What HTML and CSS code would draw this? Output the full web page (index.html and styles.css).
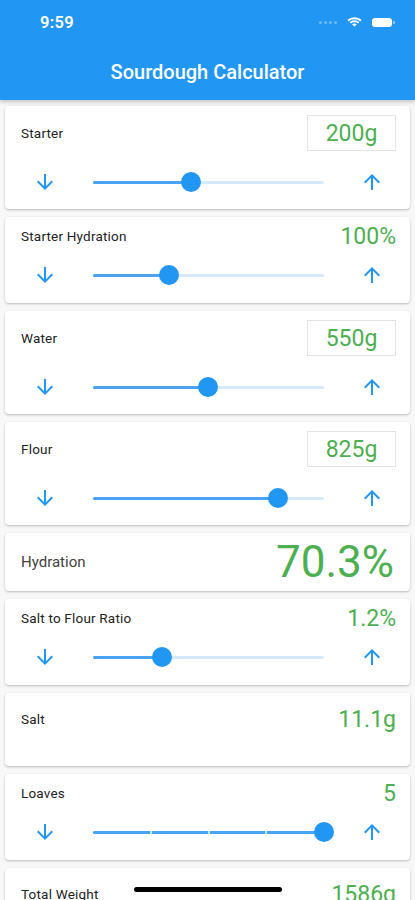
FILE: index.html
```html
<!DOCTYPE html>
<html lang="en">

<head>
    <meta charset="UTF-8">
    <meta name="viewport" content="width=device-width, initial-scale=1.0">
    <title>Sourdough Calculator</title>
    <link rel="stylesheet" href="styles.css">
</head>

<body>
    <header class="app-bar">
        <div class="status-bar">
            <span class="time">9:59</span>
            <div class="status-icons">
                <span class="signal"><i></i><i></i><i></i><i></i></span>
                <svg class="wifi" width="15" height="11" viewBox="0 0 15 11">
                    <path d="M7.5 2.2c2.2 0 4.2.8 5.7 2.2l1.3-1.4C12.6 1.2 10.2.2 7.5.2S2.4 1.2.5 3l1.3 1.4c1.5-1.4 3.5-2.2 5.7-2.2z" fill="#fff"/>
                    <path d="M7.5 5.2c1.4 0 2.6.5 3.6 1.4l1.3-1.4C11.1 4 9.4 3.2 7.5 3.2S3.9 4 2.6 5.2l1.3 1.4c1-.9 2.2-1.4 3.6-1.4z" fill="#fff"/>
                    <path d="M7.5 6.4c-.9 0-1.7.3-2.3.9l2.3 2.5 2.3-2.5c-.6-.6-1.4-.9-2.3-.9z" fill="#fff"/>
                </svg>
                <span class="battery"><span class="level"></span></span>
            </div>
        </div>
        <div class="toolbar">
            <h1>Sourdough Calculator</h1>
        </div>
    </header>

    <main class="cards">
        <!-- Starter -->
        <section class="card input">
            <div class="head">
                <span class="label">Starter</span>
                <span class="value-box">200g</span>
            </div>
            <div class="slider-row">
                <button class="step"><svg viewBox="0 0 24 24"><path d="M20 12l-1.41-1.41L13 16.17V4h-2v12.17l-5.58-5.59L4 12l8 8 8-8z"/></svg></button>
                <div class="slider" style="--v: 42.4%"><div class="track"><div class="fill"></div><div class="thumb"></div></div></div>
                <button class="step"><svg viewBox="0 0 24 24"><path d="M4 12l1.41 1.41L11 7.83V20h2V7.83l5.58 5.59L20 12l-8-8-8 8z"/></svg></button>
            </div>
        </section>

        <!-- Starter hydration -->
        <section class="card ranged">
            <div class="head">
                <span class="label">Starter Hydration</span>
                <span class="value">100%</span>
            </div>
            <div class="slider-row">
                <button class="step"><svg viewBox="0 0 24 24"><path d="M20 12l-1.41-1.41L13 16.17V4h-2v12.17l-5.58-5.59L4 12l8 8 8-8z"/></svg></button>
                <div class="slider" style="--v: 32.9%"><div class="track"><div class="fill"></div><div class="thumb"></div></div></div>
                <button class="step"><svg viewBox="0 0 24 24"><path d="M4 12l1.41 1.41L11 7.83V20h2V7.83l5.58 5.59L20 12l-8-8-8 8z"/></svg></button>
            </div>
        </section>

        <!-- Water -->
        <section class="card input">
            <div class="head">
                <span class="label">Water</span>
                <span class="value-box">550g</span>
            </div>
            <div class="slider-row">
                <button class="step"><svg viewBox="0 0 24 24"><path d="M20 12l-1.41-1.41L13 16.17V4h-2v12.17l-5.58-5.59L4 12l8 8 8-8z"/></svg></button>
                <div class="slider" style="--v: 49.8%"><div class="track"><div class="fill"></div><div class="thumb"></div></div></div>
                <button class="step"><svg viewBox="0 0 24 24"><path d="M4 12l1.41 1.41L11 7.83V20h2V7.83l5.58 5.59L20 12l-8-8-8 8z"/></svg></button>
            </div>
        </section>

        <!-- Flour -->
        <section class="card input">
            <div class="head">
                <span class="label">Flour</span>
                <span class="value-box">825g</span>
            </div>
            <div class="slider-row">
                <button class="step"><svg viewBox="0 0 24 24"><path d="M20 12l-1.41-1.41L13 16.17V4h-2v12.17l-5.58-5.59L4 12l8 8 8-8z"/></svg></button>
                <div class="slider" style="--v: 80.1%"><div class="track"><div class="fill"></div><div class="thumb"></div></div></div>
                <button class="step"><svg viewBox="0 0 24 24"><path d="M4 12l1.41 1.41L11 7.83V20h2V7.83l5.58 5.59L20 12l-8-8-8 8z"/></svg></button>
            </div>
        </section>

        <!-- Result -->
        <section class="card result">
            <div class="head">
                <span class="label big">Hydration</span>
                <span class="value huge">70.3%</span>
            </div>
        </section>

        <!-- Salt ratio -->
        <section class="card ranged">
            <div class="head">
                <span class="label">Salt to Flour Ratio</span>
                <span class="value">1.2%</span>
            </div>
            <div class="slider-row">
                <button class="step"><svg viewBox="0 0 24 24"><path d="M20 12l-1.41-1.41L13 16.17V4h-2v12.17l-5.58-5.59L4 12l8 8 8-8z"/></svg></button>
                <div class="slider" style="--v: 29.9%"><div class="track"><div class="fill"></div><div class="thumb"></div></div></div>
                <button class="step"><svg viewBox="0 0 24 24"><path d="M4 12l1.41 1.41L11 7.83V20h2V7.83l5.58 5.59L20 12l-8-8-8 8z"/></svg></button>
            </div>
        </section>

        <!-- Salt -->
        <section class="card readout">
            <div class="head">
                <span class="label">Salt</span>
                <span class="value">11.1g</span>
            </div>
        </section>

        <!-- Loaves -->
        <section class="card ranged">
            <div class="head">
                <span class="label">Loaves</span>
                <span class="value">5</span>
            </div>
            <div class="slider-row">
                <button class="step"><svg viewBox="0 0 24 24"><path d="M20 12l-1.41-1.41L13 16.17V4h-2v12.17l-5.58-5.59L4 12l8 8 8-8z"/></svg></button>
                <div class="slider" style="--v: 100%">
                    <div class="track">
                        <div class="fill"></div>
                        <span class="tick t1"></span><span class="tick t2"></span><span class="tick t3"></span>
                        <div class="thumb"></div>
                    </div>
                </div>
                <button class="step"><svg viewBox="0 0 24 24"><path d="M4 12l1.41 1.41L11 7.83V20h2V7.83l5.58 5.59L20 12l-8-8-8 8z"/></svg></button>
            </div>
        </section>

        <!-- Total -->
        <section class="card readout">
            <div class="head">
                <span class="label">Total Weight</span>
                <span class="value">1586g</span>
            </div>
        </section>
    </main>

    <div class="home-indicator"></div>
</body>

</html>
```

FILE: styles.css
```css
/* General body styling */
body {
    margin: 0;
    font-family: Roboto, "Liberation Sans", Arial, sans-serif;
    background: #f8f8f8;
    color: #212121;
}

/* Blue app bar with status bar on top */
.app-bar {
    background-color: #2196F3;
    color: #fff;
    box-shadow: 0 2px 4px rgba(0, 0, 0, 0.22);
    position: relative;
    z-index: 1;
}

.status-bar {
    height: 44px;
    display: flex;
    align-items: center;
    justify-content: space-between;
    padding: 0 23px 0 40px;
}

.time {
    font-size: 16.5px;
    font-weight: 600;
    letter-spacing: 0.3px;
}

.status-icons {
    display: flex;
    align-items: center;
    gap: 6px;
}

.signal {
    display: flex;
    gap: 2px;
    margin-right: 4px;
}

.signal i {
    width: 3px;
    height: 3px;
    border-radius: 50%;
    background: rgba(255, 255, 255, 0.35);
}

.battery {
    width: 20px;
    height: 9px;
    border-radius: 3px;
    background: #fff;
    margin-left: 4px;
    position: relative;
}

.battery::after {
    content: "";
    position: absolute;
    right: -3px;
    top: 3px;
    width: 2px;
    height: 3px;
    border-radius: 0 1px 1px 0;
    background: rgba(255, 255, 255, 0.5);
}

.toolbar {
    height: 56px;
    display: flex;
    align-items: center;
    justify-content: center;
}

.toolbar h1 {
    margin: 0;
    font-size: 20px;
    font-weight: 500;
}

/* Card list */
.cards {
    padding: 6px 5px 40px;
    display: flex;
    flex-direction: column;
    gap: 8px;
}

.card {
    background: #fff;
    border-radius: 4px;
    box-shadow: 0 1px 3px rgba(0, 0, 0, 0.2), 0 1px 1px rgba(0, 0, 0, 0.06);
    padding: 0 14px 0 16px;
    box-sizing: border-box;
}

.head {
    display: flex;
    align-items: center;
    justify-content: space-between;
}

.label {
    font-size: 13.5px;
    font-weight: 400;
    letter-spacing: 0.2px;
    color: #222;
}

.label.big {
    font-size: 15px;
    letter-spacing: 0;
    color: #424242;
}

.value,
.value-box {
    font-size: 23px;
    color: #4CAF50;
    line-height: 1;
}

.value.huge {
    font-size: 44px;
    margin-right: 2px;
}

.value-box {
    width: 89px;
    height: 36px;
    box-sizing: border-box;
    border: 1px solid #e3e3e3;
    display: flex;
    align-items: center;
    justify-content: center;
}

/* Card variants */
.card.input {
    padding-top: 9px;
    padding-bottom: 3px;
}

.card.input .head {
    height: 36px;
}

.card.input .slider-row {
    margin-top: 7px;
}

.card.ranged {
    padding-top: 8px;
    padding-bottom: 4px;
}

.card.ranged .head {
    height: 22px;
}

.card.ranged .slider-row {
    margin-top: 4px;
}

.card.result {
    height: 58px;
    display: flex;
    flex-direction: column;
    justify-content: center;
}

.card.readout {
    height: 73px;
    padding-top: 14px;
}

.card.readout .head {
    height: 24px;
}

/* Slider row */
.slider-row {
    height: 48px;
    display: flex;
    align-items: center;
}

.step {
    width: 48px;
    height: 48px;
    padding: 12px;
    border: none;
    background: none;
    box-sizing: border-box;
    flex-shrink: 0;
}

.step svg {
    width: 24px;
    height: 24px;
    fill: #2196F3;
    display: block;
}

.slider {
    flex: 1;
    padding: 0 24px;
}

.track {
    position: relative;
    height: 3px;
    background: #d6e9fc;
    border-radius: 2px;
}

.fill {
    width: var(--v);
    height: 100%;
    background: #4aa3f2;
    border-radius: 2px;
}

.thumb {
    position: absolute;
    left: var(--v);
    top: 50%;
    width: 20px;
    height: 20px;
    margin: -10px 0 0 -10px;
    border-radius: 50%;
    background: #2196F3;
}

.tick {
    position: absolute;
    top: 0;
    width: 2px;
    height: 3px;
    margin-left: -1px;
    background: rgba(255, 255, 255, 0.7);
}

.tick.t1 { left: 25%; }
.tick.t2 { left: 50%; }
.tick.t3 { left: 75%; }

/* iOS home indicator overlay */
.home-indicator {
    position: fixed;
    left: 134px;
    bottom: 8px;
    width: 148px;
    height: 5px;
    border-radius: 3px;
    background: #000;
}
```
